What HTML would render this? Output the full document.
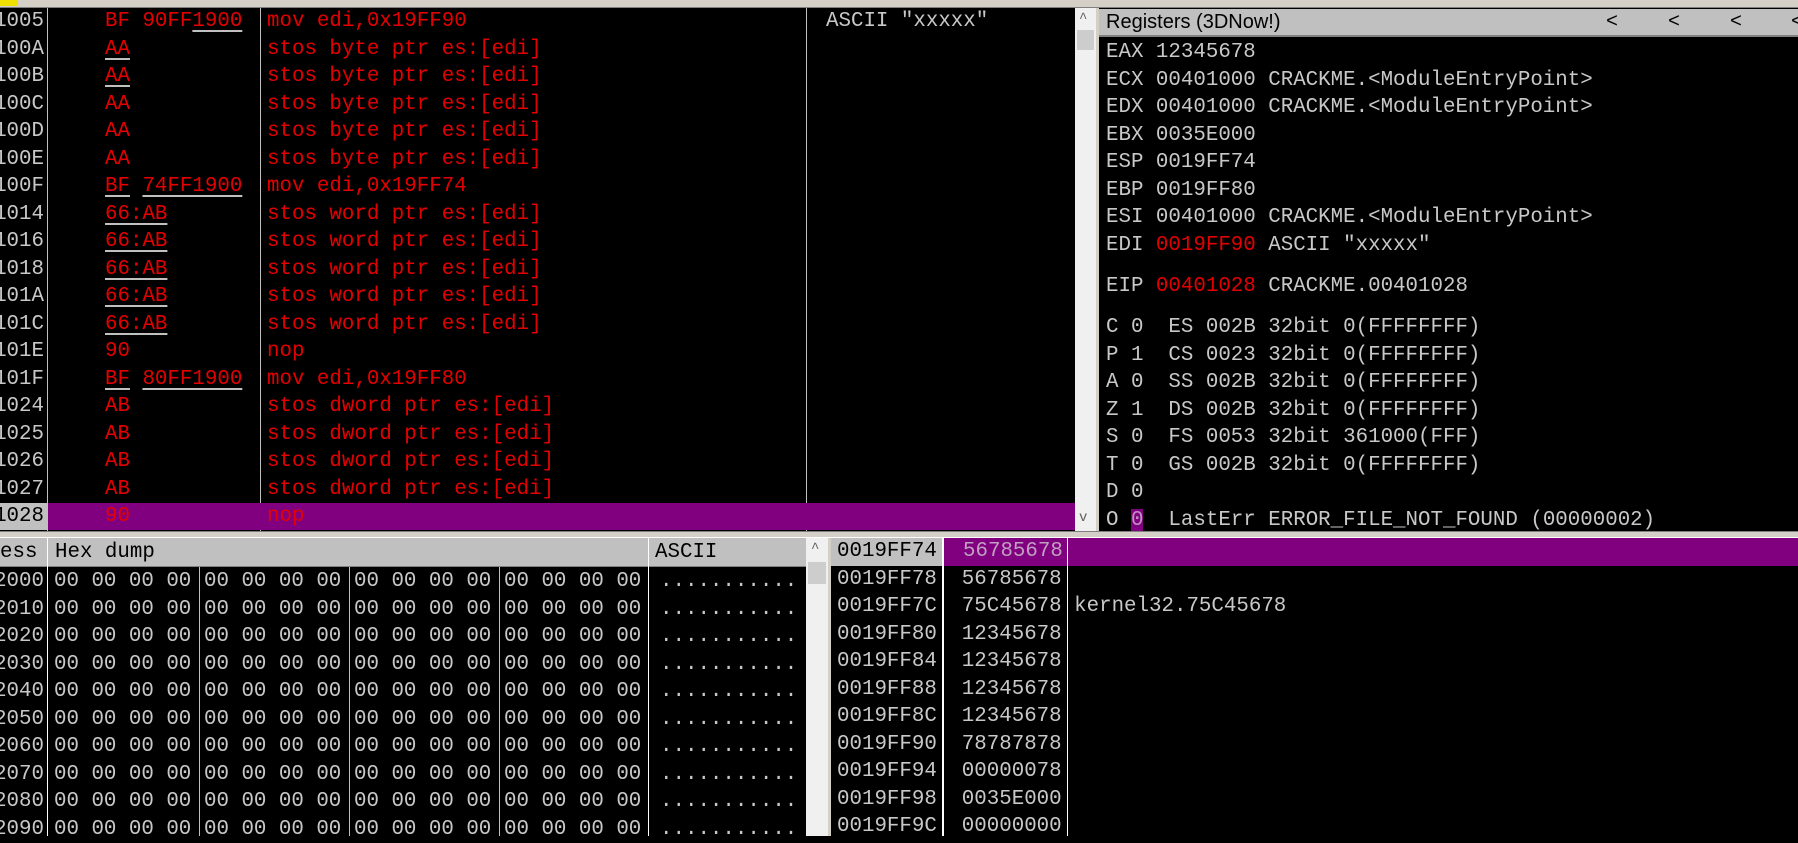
<!DOCTYPE html>
<html><head><meta charset="utf-8"><style>
*{margin:0;padding:0;box-sizing:border-box}
body{width:1798px;height:836px;background:#000;overflow:hidden;position:relative;font-family:"Liberation Mono",monospace;font-size:20.8px;color:#c8c8c8}
.a{position:absolute;white-space:pre;line-height:27.5px;height:27.5px}
.r{color:#e40000}
.l{position:absolute;background:#c0c0c0}
.u{text-decoration:underline;text-decoration-color:#c0c0c0;text-underline-offset:4px}
.ad{position:absolute;left:0;width:44px;text-align:right;overflow:hidden;direction:rtl}
.h{position:absolute;top:0}
</style></head><body>
<div class="l" style="left:0;top:0;width:1798px;height:8px;background:#d4d0c8;border-bottom:1px solid #808080"></div>
<div class="l" style="left:0;top:0;width:18px;height:6px;background:#f0e000"></div>
<div class="l" style="left:47px;top:8px;width:1px;height:523px"></div>
<div class="l" style="left:260px;top:8px;width:1px;height:523px"></div>
<div class="l" style="left:806px;top:8px;width:1px;height:523px"></div>
<div class="l" style="left:1075px;top:8px;width:21px;height:523px;background:#f0f0f0"></div>
<div class="l" style="left:1077px;top:30px;width:17px;height:20px;background:#cdcdcd"></div>
<div class="a" style="left:1079px;top:6px;font-size:14px;color:#606060">^</div>
<div class="a" style="left:1079px;top:505px;font-size:14px;color:#606060">v</div>
<div class="l" style="left:48px;top:503px;width:1027px;height:27px;background:#800080"></div>
<div class="l" style="left:0;top:503px;width:47px;height:27px;background:#c0c0c0"></div>

<div class="a" style="top:8px;left:0;width:1075px"><span class="ad">00401005</span><span style="position:absolute;left:105px" class="r">BF 90FF<span class="u">1900</span></span><span style="position:absolute;left:267px" class="r">mov edi,0x19FF90</span><span style="position:absolute;left:826px">ASCII "xxxxx"</span></div>
<div class="a" style="top:35.5px;left:0;width:1075px"><span class="ad">0040100A</span><span style="position:absolute;left:105px" class="r u">AA</span><span style="position:absolute;left:267px" class="r">stos byte ptr es:[edi]</span></div>
<div class="a" style="top:63px;left:0;width:1075px"><span class="ad">0040100B</span><span style="position:absolute;left:105px" class="r u">AA</span><span style="position:absolute;left:267px" class="r">stos byte ptr es:[edi]</span></div>
<div class="a" style="top:90.5px;left:0;width:1075px"><span class="ad">0040100C</span><span style="position:absolute;left:105px" class="r">AA</span><span style="position:absolute;left:267px" class="r">stos byte ptr es:[edi]</span></div>
<div class="a" style="top:118px;left:0;width:1075px"><span class="ad">0040100D</span><span style="position:absolute;left:105px" class="r">AA</span><span style="position:absolute;left:267px" class="r">stos byte ptr es:[edi]</span></div>
<div class="a" style="top:145.5px;left:0;width:1075px"><span class="ad">0040100E</span><span style="position:absolute;left:105px" class="r">AA</span><span style="position:absolute;left:267px" class="r">stos byte ptr es:[edi]</span></div>
<div class="a" style="top:173px;left:0;width:1075px"><span class="ad">0040100F</span><span style="position:absolute;left:105px" class="r"><span class="u">BF</span> <span class="u">74FF1900</span></span><span style="position:absolute;left:267px" class="r">mov edi,0x19FF74</span></div>
<div class="a" style="top:200.5px;left:0;width:1075px"><span class="ad">00401014</span><span style="position:absolute;left:105px" class="r"><span class="u">66:AB</span></span><span style="position:absolute;left:267px" class="r">stos word ptr es:[edi]</span></div>
<div class="a" style="top:228px;left:0;width:1075px"><span class="ad">00401016</span><span style="position:absolute;left:105px" class="r"><span class="u">66:AB</span></span><span style="position:absolute;left:267px" class="r">stos word ptr es:[edi]</span></div>
<div class="a" style="top:255.5px;left:0;width:1075px"><span class="ad">00401018</span><span style="position:absolute;left:105px" class="r"><span class="u">66:AB</span></span><span style="position:absolute;left:267px" class="r">stos word ptr es:[edi]</span></div>
<div class="a" style="top:283px;left:0;width:1075px"><span class="ad">0040101A</span><span style="position:absolute;left:105px" class="r"><span class="u">66:AB</span></span><span style="position:absolute;left:267px" class="r">stos word ptr es:[edi]</span></div>
<div class="a" style="top:310.5px;left:0;width:1075px"><span class="ad">0040101C</span><span style="position:absolute;left:105px" class="r"><span class="u">66:AB</span></span><span style="position:absolute;left:267px" class="r">stos word ptr es:[edi]</span></div>
<div class="a" style="top:338px;left:0;width:1075px"><span class="ad">0040101E</span><span style="position:absolute;left:105px" class="r">90</span><span style="position:absolute;left:267px" class="r">nop</span></div>
<div class="a" style="top:365.5px;left:0;width:1075px"><span class="ad">0040101F</span><span style="position:absolute;left:105px" class="r"><span class="u">BF</span> <span class="u">80FF1900</span></span><span style="position:absolute;left:267px" class="r">mov edi,0x19FF80</span></div>
<div class="a" style="top:393px;left:0;width:1075px"><span class="ad">00401024</span><span style="position:absolute;left:105px" class="r">AB</span><span style="position:absolute;left:267px" class="r">stos dword ptr es:[edi]</span></div>
<div class="a" style="top:420.5px;left:0;width:1075px"><span class="ad">00401025</span><span style="position:absolute;left:105px" class="r">AB</span><span style="position:absolute;left:267px" class="r">stos dword ptr es:[edi]</span></div>
<div class="a" style="top:448px;left:0;width:1075px"><span class="ad">00401026</span><span style="position:absolute;left:105px" class="r">AB</span><span style="position:absolute;left:267px" class="r">stos dword ptr es:[edi]</span></div>
<div class="a" style="top:475.5px;left:0;width:1075px"><span class="ad">00401027</span><span style="position:absolute;left:105px" class="r">AB</span><span style="position:absolute;left:267px" class="r">stos dword ptr es:[edi]</span></div>
<div class="a" style="top:503px;left:0;width:1075px"><span class="ad" style="color:#000">00401028</span><span style="position:absolute;left:105px" class="r">90</span><span style="position:absolute;left:267px" class="r">nop</span></div>

<div class="l" style="left:1096px;top:8px;width:3px;height:530px;background:#d4d0c8"></div>
<div class="l" style="left:1099px;top:9px;width:699px;height:28px;background:#c0c0c0;border-bottom:2px solid #808080"></div>
<div class="a" style="left:1106px;top:9px;color:#000;font-family:'Liberation Sans',sans-serif;font-size:20px">Registers (3DNow!)</div>
<div class="a" style="left:1606px;top:9px;color:#000;font-size:20px">&lt;</div>
<div class="a" style="left:1668px;top:9px;color:#000;font-size:20px">&lt;</div>
<div class="a" style="left:1730px;top:9px;color:#000;font-size:20px">&lt;</div>
<div class="a" style="left:1791px;top:9px;color:#000;font-size:20px">&lt;</div>
<div class="a" style="left:1106px;top:39px">EAX 12345678</div>
<div class="a" style="left:1106px;top:66.5px">ECX 00401000 CRACKME.&lt;ModuleEntryPoint&gt;</div>
<div class="a" style="left:1106px;top:94px">EDX 00401000 CRACKME.&lt;ModuleEntryPoint&gt;</div>
<div class="a" style="left:1106px;top:121.5px">EBX 0035E000</div>
<div class="a" style="left:1106px;top:149px">ESP 0019FF74</div>
<div class="a" style="left:1106px;top:176.5px">EBP 0019FF80</div>
<div class="a" style="left:1106px;top:204px">ESI 00401000 CRACKME.&lt;ModuleEntryPoint&gt;</div>
<div class="a" style="left:1106px;top:231.5px">EDI <span class="r">0019FF90</span> ASCII "xxxxx"</div>
<div class="a" style="left:1106px;top:273px">EIP <span class="r">00401028</span> CRACKME.00401028</div>
<div class="a" style="left:1106px;top:314px">C 0  ES 002B 32bit 0(FFFFFFFF)</div>
<div class="a" style="left:1106px;top:341.5px">P 1  CS 0023 32bit 0(FFFFFFFF)</div>
<div class="a" style="left:1106px;top:369px">A 0  SS 002B 32bit 0(FFFFFFFF)</div>
<div class="a" style="left:1106px;top:396.5px">Z 1  DS 002B 32bit 0(FFFFFFFF)</div>
<div class="a" style="left:1106px;top:424px">S 0  FS 0053 32bit 361000(FFF)</div>
<div class="a" style="left:1106px;top:451.5px">T 0  GS 002B 32bit 0(FFFFFFFF)</div>
<div class="a" style="left:1106px;top:479px">D 0</div>
<div class="a" style="left:1106px;top:506.5px">O <span style="background:#800080;color:#c090c0">0</span>  LastErr ERROR_FILE_NOT_FOUND (00000002)</div>

<div class="l" style="left:0;top:531px;width:1798px;height:7px;background:#d4d0c8;border-top:1px solid #808080;border-bottom:1px solid #fff"></div>

<div class="l" style="left:0;top:538px;width:806px;height:29px;background:#c0c0c0;border-bottom:1px solid #808080"></div>
<div class="l" style="left:47px;top:538px;width:1px;height:298px;background:#fff"></div>
<div class="l" style="left:648px;top:538px;width:1px;height:298px;background:#fff"></div>
<div class="l" style="left:199px;top:567px;width:1px;height:269px"></div>
<div class="l" style="left:349px;top:567px;width:1px;height:269px"></div>
<div class="l" style="left:499px;top:567px;width:1px;height:269px"></div>
<div class="a" style="left:0;top:539px;color:#000">ess</div>
<div class="a" style="left:55px;top:539px;color:#000">Hex dump</div>
<div class="a" style="left:655px;top:539px;color:#000">ASCII</div>
<div class="l" style="left:806px;top:538px;width:22px;height:298px;background:#f0f0f0"></div>
<div class="l" style="left:808px;top:562px;width:18px;height:22px;background:#cdcdcd"></div>
<div class="a" style="left:811px;top:536px;font-size:14px;color:#606060">^</div>

<div class="a" style="left:0;top:568px;width:806px"><span class="ad">2000</span><span class="h" style="left:54px">00 00 00 00</span><span class="h" style="left:204px">00 00 00 00</span><span class="h" style="left:354px">00 00 00 00</span><span class="h" style="left:504px">00 00 00 00</span><span class="h" style="left:660px">...........</span></div>
<div class="a" style="left:0;top:595.5px;width:806px"><span class="ad">2010</span><span class="h" style="left:54px">00 00 00 00</span><span class="h" style="left:204px">00 00 00 00</span><span class="h" style="left:354px">00 00 00 00</span><span class="h" style="left:504px">00 00 00 00</span><span class="h" style="left:660px">...........</span></div>
<div class="a" style="left:0;top:623px;width:806px"><span class="ad">2020</span><span class="h" style="left:54px">00 00 00 00</span><span class="h" style="left:204px">00 00 00 00</span><span class="h" style="left:354px">00 00 00 00</span><span class="h" style="left:504px">00 00 00 00</span><span class="h" style="left:660px">...........</span></div>
<div class="a" style="left:0;top:650.5px;width:806px"><span class="ad">2030</span><span class="h" style="left:54px">00 00 00 00</span><span class="h" style="left:204px">00 00 00 00</span><span class="h" style="left:354px">00 00 00 00</span><span class="h" style="left:504px">00 00 00 00</span><span class="h" style="left:660px">...........</span></div>
<div class="a" style="left:0;top:678px;width:806px"><span class="ad">2040</span><span class="h" style="left:54px">00 00 00 00</span><span class="h" style="left:204px">00 00 00 00</span><span class="h" style="left:354px">00 00 00 00</span><span class="h" style="left:504px">00 00 00 00</span><span class="h" style="left:660px">...........</span></div>
<div class="a" style="left:0;top:705.5px;width:806px"><span class="ad">2050</span><span class="h" style="left:54px">00 00 00 00</span><span class="h" style="left:204px">00 00 00 00</span><span class="h" style="left:354px">00 00 00 00</span><span class="h" style="left:504px">00 00 00 00</span><span class="h" style="left:660px">...........</span></div>
<div class="a" style="left:0;top:733px;width:806px"><span class="ad">2060</span><span class="h" style="left:54px">00 00 00 00</span><span class="h" style="left:204px">00 00 00 00</span><span class="h" style="left:354px">00 00 00 00</span><span class="h" style="left:504px">00 00 00 00</span><span class="h" style="left:660px">...........</span></div>
<div class="a" style="left:0;top:760.5px;width:806px"><span class="ad">2070</span><span class="h" style="left:54px">00 00 00 00</span><span class="h" style="left:204px">00 00 00 00</span><span class="h" style="left:354px">00 00 00 00</span><span class="h" style="left:504px">00 00 00 00</span><span class="h" style="left:660px">...........</span></div>
<div class="a" style="left:0;top:788px;width:806px"><span class="ad">2080</span><span class="h" style="left:54px">00 00 00 00</span><span class="h" style="left:204px">00 00 00 00</span><span class="h" style="left:354px">00 00 00 00</span><span class="h" style="left:504px">00 00 00 00</span><span class="h" style="left:660px">...........</span></div>
<div class="a" style="left:0;top:815.5px;width:806px"><span class="ad">2090</span><span class="h" style="left:54px">00 00 00 00</span><span class="h" style="left:204px">00 00 00 00</span><span class="h" style="left:354px">00 00 00 00</span><span class="h" style="left:504px">00 00 00 00</span><span class="h" style="left:660px">...........</span></div>

<div class="l" style="left:828px;top:538px;width:3px;height:298px;background:#d4d0c8"></div>
<div class="l" style="left:831px;top:538px;width:111px;height:28px;background:#c0c0c0"></div>
<div class="l" style="left:944px;top:538px;width:854px;height:28px;background:#800080"></div>
<div class="l" style="left:942px;top:538px;width:2px;height:298px;background:#fff"></div>
<div class="l" style="left:1067px;top:538px;width:1px;height:298px;background:#fff"></div>
<div class="a" style="left:837px;top:538px;color:#000">0019FF74</div><div class="a" style="left:963px;top:538px;color:#c0a0c0">56785678</div>
<div class="a" style="left:837px;top:565.5px">0019FF78  56785678</div>
<div class="a" style="left:837px;top:593px">0019FF7C  75C45678 kernel32.75C45678</div>
<div class="a" style="left:837px;top:620.5px">0019FF80  12345678</div>
<div class="a" style="left:837px;top:648px">0019FF84  12345678</div>
<div class="a" style="left:837px;top:675.5px">0019FF88  12345678</div>
<div class="a" style="left:837px;top:703px">0019FF8C  12345678</div>
<div class="a" style="left:837px;top:730.5px">0019FF90  78787878</div>
<div class="a" style="left:837px;top:758px">0019FF94  00000078</div>
<div class="a" style="left:837px;top:785.5px">0019FF98  0035E000</div>
<div class="a" style="left:837px;top:813px">0019FF9C  00000000</div>
</body></html>
